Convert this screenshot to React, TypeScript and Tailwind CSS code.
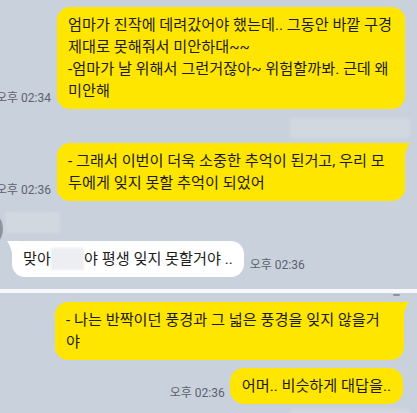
import React from "react";

const font = "font-[family-name:Roboto,'Noto_Sans_CJK_KR',sans-serif]";

function TailRight({ color }: { color: string }) {
  return (
    <svg
      className="absolute top-0 right-[-5px]"
      width="15"
      height="15"
      viewBox="0 0 15 15"
    >
      <path d="M0 0 H15 Q11 5 9.5 15 H0 Z" fill={color} />
    </svg>
  );
}

function TailLeft({ color }: { color: string }) {
  return (
    <svg
      className="absolute top-0 left-[-5px]"
      width="15"
      height="15"
      viewBox="0 0 15 15"
    >
      <path d="M15 0 H0 Q4 5 5.5 15 H15 Z" fill={color} />
    </svg>
  );
}

function Time({ t, mb = "mb-[4px]" }: { t: string; mb?: string }) {
  return (
    <span
      className={`shrink-0 whitespace-nowrap text-[12px] leading-[14px] text-[#5c636c] ${mb}`}
    >
      {t}
    </span>
  );
}

export default function App() {
  return (
    <div
      className={`w-[417px] h-[413px] overflow-hidden bg-[#c9d1dc] ${font} text-[15.2px] leading-[22px] text-[#1c1c1c] pt-[7px]`}
    >
      {/* Row 1 */}
      <div className="flex justify-end items-end gap-[6px] pr-[12px]">
        <Time t="오후 02:34" />
        <div className="shrink-0 w-[348px] rounded-[13px] bg-[#ffe600] px-[11px] py-[7px] whitespace-nowrap">
          <div>엄마가 진작에 데려갔어야 했는데.. 그동안 바깥 구경</div>
          <div>제대로 못해줘서 미안하대~~</div>
          <div>-엄마가 날 위해서 그런거잖아~ 위험할까봐. 근데 왜</div>
          <div>미안해</div>
        </div>
      </div>

      {/* blurred name */}
      <div className="mt-[9px] flex justify-end pr-[7px]">
        <div className="h-[20px] w-[120px] rounded-[3px] bg-[#d2d8e0] blur-[1.5px]" />
      </div>

      {/* Row 2 */}
      <div className="mt-[5px] flex justify-end items-end gap-[6px] pr-[12px]">
        <Time t="오후 02:36" />
        <div className="relative shrink-0 w-[348px] rounded-[13px] bg-[#ffe600] px-[11px] py-[7px] whitespace-nowrap">
          <TailRight color="#ffe600" />
          <div className="relative">- 그래서 이번이 더욱 소중한 추억이 된거고, 우리 모</div>
          <div className="relative">두에게 잊지 못할 추억이 되었어</div>
        </div>
      </div>

      {/* name row with avatar */}
      <div className="mt-[11px] flex items-start h-[21px]">
        <div className="shrink-0 -ml-[37px] -mt-[3px] h-[40px] w-[40px] rounded-full bg-[#8e949c]" />
        <div className="ml-[2px] h-[21px] w-[55px] rounded-[3px] bg-[#d2d8e0] blur-[1.5px]" />
      </div>

      {/* White bubble */}
      <div className="mt-[8px] flex items-end gap-[6px] pl-[12px]">
        <div className="relative shrink-0 rounded-[13px] bg-white px-[11px] py-[7px] whitespace-nowrap flex items-center">
          <TailLeft color="#ffffff" />
          <span className="relative">맞아</span>
          <span className="relative inline-block h-[22px] w-[33px] bg-[#eceef1] blur-[1px]" />
          <span className="relative">야 평생 잊지 못할거야 ..</span>
        </div>
        <Time t="오후 02:36" mb="mb-[5px]" />
      </div>

      {/* separator */}
      <div className="mt-[12px] h-[4px] bg-[#f7f8fa]" />
      <div className="mt-[1px] flex justify-end pr-[17px]">
        <div className="h-[2px] w-[7px] rounded-full bg-[#8d939b]" />
      </div>

      {/* Row 3 */}
      <div className="mt-[6px] flex justify-end pr-[13px]">
        <div className="relative shrink-0 w-[349px] rounded-[13px] bg-[#ffe600] px-[11px] py-[7px] whitespace-nowrap">
          <TailRight color="#ffe600" />
          <div className="relative">- 나는 반짝이던 풍경과 그 넓은 풍경을 잊지 않을거</div>
          <div className="relative">야</div>
        </div>
      </div>

      {/* Row 4 */}
      <div className="mt-[8px] flex justify-end items-end gap-[5px] pr-[14px]">
        <Time t="오후 02:36" />
        <div className="shrink-0 rounded-[14px] bg-[#ffe600] px-[12px] py-[7px] whitespace-nowrap">
          어머.. 비슷하게 대답을..
        </div>
      </div>

      {/* bottom blurred */}
      <div className="mt-[5px] flex justify-end pr-[7px]">
        <div className="h-[20px] w-[120px] rounded-[3px] bg-[#d2d8e0] blur-[1.5px]" />
      </div>
    </div>
  );
}
